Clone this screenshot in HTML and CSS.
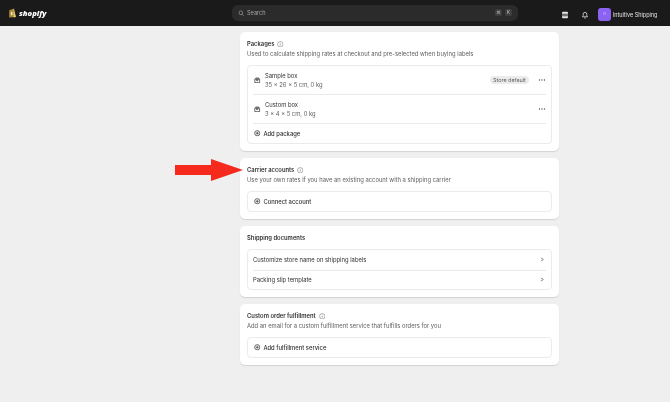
FILE: index.html
```html
<!DOCTYPE html>
<html lang="en">
<head>
<meta charset="utf-8">
<title>Shipping settings</title>
<link rel="stylesheet" href="styles.css">
</head>
<body>
<svg width="0" height="0" class="defs">
  <symbol id="info" viewBox="0 0 16 16"><circle cx="8" cy="8" r="6.6" fill="none" stroke="currentColor" stroke-width="1.2"/><path d="M8 7.2v4M8 4.4v1.2" stroke="currentColor" stroke-width="1.4" fill="none"/></symbol>
  <symbol id="plus" viewBox="0 0 16 16"><circle cx="8" cy="8" r="6.4" fill="none" stroke="currentColor" stroke-width="1.8"/><path d="M8 4.500v7M4.500 8h7" stroke="currentColor" stroke-width="1.8" fill="none"/></symbol>
  <symbol id="box" viewBox="0 0 16 16"><path d="M2 5h12v9H2z M4.500 5V2.500h7V5 M6.500 5v4h3V5" fill="none" stroke="currentColor" stroke-width="1.800"/></symbol>
  <symbol id="dots" viewBox="0 0 16 16"><circle cx="3" cy="8" r="1.300" fill="currentColor"/><circle cx="8" cy="8" r="1.300" fill="currentColor"/><circle cx="13" cy="8" r="1.300" fill="currentColor"/></symbol>
  <symbol id="chev" viewBox="0 0 16 16"><path d="M6 3.500 10.500 8 6 12.500" fill="none" stroke="currentColor" stroke-width="2.400"/></symbol>
</svg>

<header class="topbar">
  <div class="brand">
    <svg class="bag" viewBox="0 0 16 18"><path d="M2 4 11 1l3 15-12 1z" fill="#a8873a"/><path d="M10 1.500 14 16l-4 1z" fill="#e2d07a"/><path d="M5 7h3v6H5z" fill="#f3e6b0"/></svg>
    <span class="wordmark">shopify</span>
  </div>
  <div class="search">
    <svg class="search-icon" viewBox="0 0 16 16"><circle cx="7" cy="7" r="4.600" fill="none" stroke="currentColor" stroke-width="1.600"/><path d="m10.500 10.500 3.500 3.500" stroke="currentColor" stroke-width="1.600"/></svg>
    <span class="search-label">Search</span>
    <span class="keys"><kbd>⌘</kbd><kbd>K</kbd></span>
  </div>
  <div class="account">
    <svg class="top-icon" viewBox="0 0 16 16"><path d="M2 3.500Q2 1.500 4 1.500h8q2 0 2 2v9q0 2-2 2H4q-2 0-2-2z" fill="currentColor"/><path d="M2 6.500h12M2 9.500h12" stroke="#1a1a1a" stroke-width="1.500"/></svg>
    <svg class="top-icon bell" viewBox="0 0 16 16"><path d="M3 11.500h10l-1.300-2V6.500a3.700 3.700 0 0 0-7.400 0v3z" fill="none" stroke="currentColor" stroke-width="1.600"/><path d="M6.500 14h3" stroke="currentColor" stroke-width="1.600"/></svg>
    <span class="avatar">IS</span>
    <span class="store">Intuitive Shipping</span>
  </div>
</header>

<main class="page">
  <section class="card">
    <h2 class="title">Packages <svg class="info"><use href="#info"/></svg></h2>
    <p class="desc">Used to calculate shipping rates at checkout and pre-selected when buying labels</p>
    <div class="inner">
      <div class="row pkg first">
        <svg class="icon box"><use href="#box"/></svg>
        <div class="pkg-text"><div>Sample box</div><div class="muted">35 × 26 × 5 cm, 0 kg</div></div>
        <span class="badge">Store default</span>
        <svg class="dots"><use href="#dots"/></svg>
      </div>
      <div class="row pkg">
        <svg class="icon box"><use href="#box"/></svg>
        <div class="pkg-text"><div>Custom box</div><div class="muted">3 × 4 × 5 cm, 0 kg</div></div>
        <svg class="dots"><use href="#dots"/></svg>
      </div>
      <div class="row action"><svg class="icon"><use href="#plus"/></svg><span>Add package</span></div>
    </div>
  </section>

  <section class="card">
    <h2 class="title">Carrier accounts <svg class="info"><use href="#info"/></svg></h2>
    <p class="desc">Use your own rates if you have an existing account with a shipping carrier</p>
    <div class="inner">
      <div class="row action solo"><svg class="icon"><use href="#plus"/></svg><span>Connect account</span></div>
    </div>
  </section>

  <section class="card">
    <h2 class="title docs">Shipping documents</h2>
    <div class="inner">
      <div class="row link"><span>Customize store name on shipping labels</span><svg class="chev"><use href="#chev"/></svg></div>
      <div class="row link"><span>Packing slip template</span><svg class="chev"><use href="#chev"/></svg></div>
    </div>
  </section>

  <section class="card">
    <h2 class="title">Custom order fulfillment <svg class="info"><use href="#info"/></svg></h2>
    <p class="desc">Add an email for a custom fulfillment service that fulfills orders for you</p>
    <div class="inner">
      <div class="row action solo"><svg class="icon"><use href="#plus"/></svg><span>Add fulfillment service</span></div>
    </div>
  </section>
</main>

<svg class="arrow" viewBox="0 0 68 22"><path d="M0 6h36V0l32 11-32 11v-6H0z" fill="#f5291c"/></svg>
</body>
</html>
```

FILE: styles.css
```css
* { box-sizing: border-box; }
html, body { margin: 0; height: 100%; }
body {
  background: #efefef;
  font-family: Inter, "Liberation Sans", sans-serif;
  font-size: 5.85px;
  line-height: 10px;
  color: #303030;
  overflow: hidden;
  position: relative;
}
.defs { position: absolute; }

.topbar {
  height: 25.5px;
  background: #1a1a1a;
  display: grid;
  grid-template-columns: 224px 286px 1fr;
  align-items: center;
  padding: 0 8px;
  color: #e3e3e3;
  filter: blur(.35px);
}
.brand { display: flex; align-items: center; gap: 2px; }
.bag { width: 9px; height: 10px; }
.wordmark {
  font-family: "Open Sans", sans-serif;
  font-weight: 800;
  font-style: italic;
  font-size: 7.6px;
  color: #fff;
}
.search {
  height: 16.500px;
  background: #2b2b2b;
  border-radius: 6px;
  display: flex;
  align-items: center;
  padding: 0 6px;
  gap: 2.500px;
  color: #a5a5a5;
}
.search-icon { width: 6.500px; height: 6.500px; }
.search-label { flex: 1; font-size: 5.600px; }
.keys { display: flex; gap: 3px; }
kbd {
  width: 7px;
  height: 7px;
  border-radius: 1.500px;
  background: #3d3d3d;
  color: #cfcfcf;
  font-family: Inter, sans-serif;
  font-size: 4.500px;
  line-height: 7px;
  text-align: center;
}
.account {
  display: flex;
  align-items: center;
  justify-content: flex-end;
  padding: 4px 4.500px 0 0;
}
.top-icon { width: 8px; height: 8px; margin-right: 12px; color: #e3e3e3; }
.bell { margin-right: 9px; }
.avatar {
  width: 13px;
  height: 13px;
  border-radius: 3px;
  background: #8c62f5;
  color: #c9b8ff;
  font-size: 3.500px;
  line-height: 13px;
  text-align: center;
  margin-right: 1.500px;
  flex: none;
}
.store { font-size: 5.500px; color: #e3e3e3; white-space: nowrap; }

.page {
  width: 319px;
  margin: 6.500px 0 0 240px;
  display: flex;
  flex-direction: column;
  gap: 7px;
  filter: blur(.35px);
}
.card {
  background: #fff;
  border-radius: 5px;
  box-shadow: 0 1px 1px rgba(0, 0, 0, .12);
  padding: 7px;
}
.title {
  margin: 0;
  font-size: 5.85px;
  line-height: 10px;
  font-weight: 600;
  color: #303030;
  display: flex;
  align-items: center;
  gap: 3px;
}
.info { width: 6.500px; height: 6.500px; color: #616161; }
.docs { margin-bottom: 6px; }
.desc { margin: 0 0 6px; line-height: 10px; color: #616161; }
.inner { border: 1px solid #ebebeb; border-radius: 4px; padding: 0 5px; }
.row { display: flex; align-items: center; }
.row + .row { border-top: 1px solid #ebebeb; }
.icon { width: 6.500px; height: 6.500px; flex: none; color: #303030; margin: 0 2.700px 0 1.200px; }
.box { margin-right: 4.300px; }
.pkg { height: 29px; }
.first { height: 28px; }
.pkg-text { flex: 1; line-height: 9px; }
.muted { color: #616161; }
.badge {
  background: #ebebeb;
  border-radius: 4px;
  height: 8px;
  line-height: 8px;
  padding: 0 2.700px;
  font-size: 5.400px;
  color: #616161;
  margin-right: 9.500px;
}
.dots { width: 8px; height: 8px; color: #4a4a4a; }
.action { height: 20px; font-weight: 500; }
.solo { height: 19px; }
.link { height: 19.500px; justify-content: space-between; }
.chev { width: 6px; height: 7px; color: #4a4a4a; margin-right: 1px; }

.arrow { position: absolute; left: 175px; top: 159px; width: 68px; height: 22px; filter: blur(.35px); }
```
